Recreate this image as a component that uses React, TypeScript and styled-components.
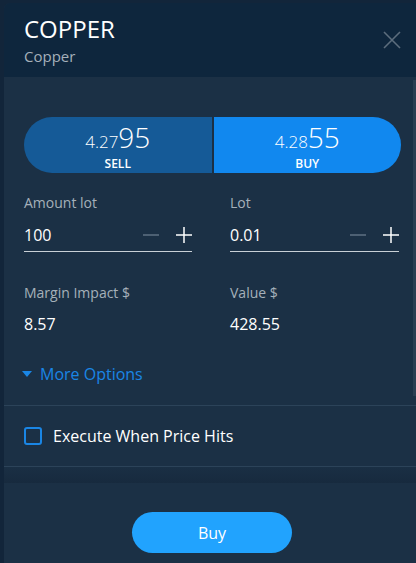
import React from "react";
import styled, { createGlobalStyle } from "styled-components";

const Global = createGlobalStyle`
  html, body { margin: 0; padding: 0; background: #13263a; }
  body { font-family: "Open Sans", "Noto Sans", sans-serif; }
  * { box-sizing: border-box; }
`;

const Page = styled.div`
  width: 416px;
  height: 563px;
  padding: 3px 0 0 4px;
  background: #12253a;
  overflow: hidden;
`;

const Panel = styled.div`
  position: relative;
  height: 560px;
  background: #1b3045;
  border-top-left-radius: 6px;
  overflow: hidden;
  display: flex;
  flex-direction: column;
`;

const Header = styled.div`
  height: 74px;
  background: #0e263d;
  padding: 11px 20px 0 20px;
  display: flex;
  justify-content: space-between;
  align-items: flex-start;
`;

const TitleBlock = styled.div`
  display: flex;
  flex-direction: column;
`;

const Title = styled.div`
  color: #ffffff;
  font-size: 24px;
  line-height: 30px;
  font-weight: 400;
`;

const Subtitle = styled.div`
  color: #a5b0ba;
  font-size: 15px;
  line-height: 20px;
  margin-top: 2px;
`;

const Close = styled.button`
  margin-top: 17px;
  margin-right: -5px;
  width: 18px;
  height: 18px;
  padding: 0;
  border: none;
  background: transparent;
  display: flex;
`;

const Scrollbar = styled.div`
  position: absolute;
  right: 0;
  top: 77px;
  width: 3px;
  height: 316px;
  background: #2a3e52;
`;

const Body = styled.div`
  padding: 40px 15px 0 20px;
`;

const Pill = styled.div`
  display: flex;
  gap: 2px;
  height: 56px;
  border-radius: 28px;
  overflow: hidden;
`;

const Side = styled.div<{ $buy?: boolean }>`
  flex: 1;
  background: ${(p) => (p.$buy ? "#1188ef" : "#155a97")};
  color: #ffffff;
  display: flex;
  flex-direction: column;
  align-items: center;
  justify-content: center;
  padding-top: 3px;
`;

const Price = styled.div`
  display: flex;
  align-items: baseline;
  font-weight: 300;
  line-height: 28px;
`;

const PriceSmall = styled.span`
  font-size: 17px;
`;

const PriceBig = styled.span`
  font-size: 28px;
`;

const SideLabel = styled.div`
  font-size: 12px;
  line-height: 14px;
  font-weight: 600;
  margin-top: 1px;
`;

const Grid = styled.div`
  display: grid;
  grid-template-columns: 168px 169px;
  column-gap: 38px;
  margin-top: 20px;
`;

const Field = styled.div`
  display: flex;
  flex-direction: column;
`;

const Label = styled.div`
  color: #a5b0ba;
  font-size: 14px;
  line-height: 20px;
`;

const InputRow = styled.div`
  display: flex;
  align-items: center;
  height: 39px;
  border-bottom: 1px solid #c9d0d6;
  padding-top: 6px;
`;

const Value = styled.div`
  flex: 1;
  color: #ffffff;
  font-size: 16px;
  font-weight: 500;
`;

const Step = styled.button`
  width: 16px;
  height: 16px;
  padding: 0;
  margin-left: 17px;
  border: none;
  background: transparent;
  display: flex;
`;

const Stat = styled.div`
  display: flex;
  flex-direction: column;
  margin-top: 31px;
`;

const StatValue = styled.div`
  color: #ffffff;
  font-size: 16px;
  font-weight: 500;
  line-height: 20px;
  margin-top: 11px;
`;

const More = styled.div`
  display: flex;
  align-items: center;
  gap: 8px;
  color: #1a86e5;
  font-size: 16px;
  line-height: 20px;
  margin: 30px 0 0 -2px;
`;

const Spacer = styled.div`
  height: 21px;
`;

const Divider = styled.div`
  height: 1px;
  background: #2c4359;
`;

const CheckRow = styled.div`
  display: flex;
  gap: 11px;
  padding: 20px 20px 0 20px;
  height: 60px;
  align-items: flex-start;
`;

const Box = styled.div`
  width: 18px;
  height: 18px;
  border: 2px solid #1a86e5;
  border-radius: 3px;
  margin-top: 1px;
`;

const CheckText = styled.div`
  color: #ffffff;
  font-size: 16px;
  font-weight: 500;
  line-height: 20px;
`;

const Band = styled.div`
  height: 16px;
  background: linear-gradient(#1a2f44, #172a3e);
`;

const Footer = styled.div`
  flex: 1;
  display: flex;
  justify-content: center;
  padding: 29px 0 0 4px;
`;

const BuyButton = styled.button`
  width: 160px;
  height: 41px;
  border: none;
  border-radius: 21px;
  background: #21a3fe;
  color: #ffffff;
  font-family: "Open Sans", sans-serif;
  font-size: 16px;
  font-weight: 500;
`;

const Minus = () => (
  <svg width="16" height="16" viewBox="0 0 16 16">
    <path d="M0 8h16" stroke="#5f7183" strokeWidth="1.5" />
  </svg>
);

const Plus = () => (
  <svg width="16" height="16" viewBox="0 0 16 16">
    <path d="M0 8h16M8 0v16" stroke="#ffffff" strokeWidth="1.5" />
  </svg>
);

const Qty = ({ label, value }: { label: string; value: string }) => (
  <Field>
    <Label>{label}</Label>
    <InputRow>
      <Value>{value}</Value>
      <Step><Minus /></Step>
      <Step><Plus /></Step>
    </InputRow>
  </Field>
);

export default function App() {
  return (
    <>
      <Global />
      <Page>
        <Panel>
          <Header>
            <TitleBlock>
              <Title>COPPER</Title>
              <Subtitle>Copper</Subtitle>
            </TitleBlock>
            <Close aria-label="close">
              <svg width="18" height="18" viewBox="0 0 18 18">
                <path d="M1 1L17 17M17 1L1 17" stroke="#5c6d7d" strokeWidth="1.6" />
              </svg>
            </Close>
          </Header>
          <Scrollbar />
          <Body>
            <Pill>
              <Side>
                <Price>
                  <PriceSmall>4.27</PriceSmall>
                  <PriceBig>95</PriceBig>
                </Price>
                <SideLabel>SELL</SideLabel>
              </Side>
              <Side $buy>
                <Price>
                  <PriceSmall>4.28</PriceSmall>
                  <PriceBig>55</PriceBig>
                </Price>
                <SideLabel>BUY</SideLabel>
              </Side>
            </Pill>
            <Grid>
              <Qty label="Amount lot" value="100" />
              <Qty label="Lot" value="0.01" />
              <Stat>
                <Label>Margin Impact $</Label>
                <StatValue>8.57</StatValue>
              </Stat>
              <Stat>
                <Label>Value $</Label>
                <StatValue>428.55</StatValue>
              </Stat>
            </Grid>
            <More>
              <svg width="10" height="6" viewBox="0 0 10 6">
                <path d="M0 0h10L5 6z" fill="#1a86e5" />
              </svg>
              More Options
            </More>
          </Body>
          <Spacer />
          <Divider />
          <CheckRow>
            <Box />
            <CheckText>Execute When Price Hits</CheckText>
          </CheckRow>
          <Divider />
          <Band />
          <Footer>
            <BuyButton>Buy</BuyButton>
          </Footer>
        </Panel>
      </Page>
    </>
  );
}
